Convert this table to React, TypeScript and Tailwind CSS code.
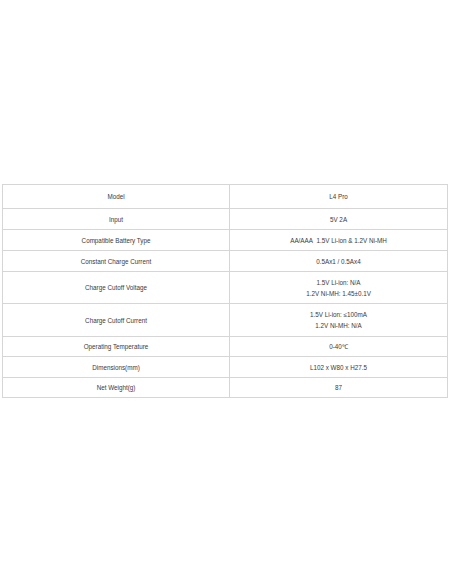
const specs: { label: string; value: string[]; h: string }[] = [
  { label: "Model", value: ["L4 Pro"], h: "h-[24px]" },
  { label: "Input", value: ["5V 2A"], h: "h-[21px]" },
  { label: "Compatible Battery Type", value: ["AA/AAA\u00a0 1.5V Li-ion & 1.2V Ni-MH"], h: "h-[21px]" },
  { label: "Constant Charge Current", value: ["0.5Ax1 / 0.5Ax4"], h: "h-[21px]" },
  { label: "Charge Cutoff Voltage", value: ["1.5V Li-ion: N/A", "1.2V Ni-MH: 1.45±0.1V"], h: "h-[32px]" },
  { label: "Charge Cutoff Current", value: ["1.5V Li-ion: ≤100mA", "1.2V Ni-MH: N/A"], h: "h-[33px]" },
  { label: "Operating Temperature", value: ["0-40℃"], h: "h-[20px]" },
  { label: "Dimensions(mm)", value: ["L102 x W80 x H27.5"], h: "h-[21px]" },
  { label: "Net Weight(g)", value: ["87"], h: "h-[20px]" },
];

export default function App() {
  return (
    <div className="w-[452px] h-[584px] bg-white pt-[184px] pl-[2px] font-['Liberation_Sans',Arial,sans-serif]">
      <table className="w-[446px] border-collapse table-fixed text-[6.3px] leading-[11px] text-[#3a3a3a]">
        <colgroup>
          <col className="w-[227px]" />
          <col />
        </colgroup>
        <tbody>
          {specs.map((row) => (
            <tr key={row.label} className={row.h}>
              <td className="border border-[#d6d6d6] text-center align-middle p-0">{row.label}</td>
              <td className="border border-[#d6d6d6] text-center align-middle p-0">
                {row.value.map((v) => (
                  <div key={v}>{v}</div>
                ))}
              </td>
            </tr>
          ))}
        </tbody>
      </table>
    </div>
  );
}
